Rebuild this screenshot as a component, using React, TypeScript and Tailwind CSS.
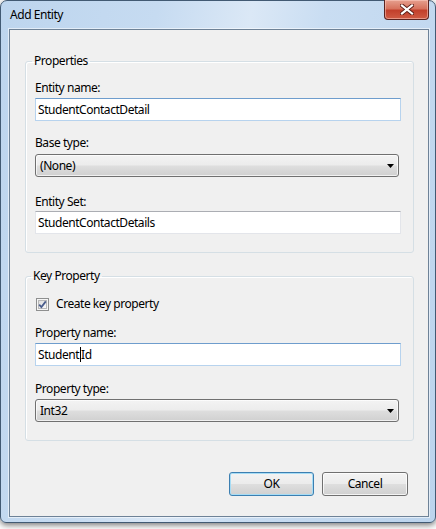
import React from "react";

const FONT = "font-['Segoe_UI','Noto_Sans',sans-serif] tracking-[-0.45px]";

function TextBox({ children, focused }: { children: React.ReactNode; focused?: boolean }) {
  return (
    <div
      className={
        "h-[23px] w-full flex items-center pl-[2px] bg-white border " +
        (focused
          ? "border-[#b7d3ee] border-t-[#6e9dcd]"
          : "border-[#e3e5ea] border-t-[#abadb3]")
      }
    >
      {children}
    </div>
  );
}

function Combo({ value }: { value: string }) {
  return (
    <div className="h-[23px] w-[calc(100%-2px)] flex items-center justify-between pl-[4px] pr-[4px] rounded-[3px] border border-[#707070] bg-[linear-gradient(to_bottom,#f3f3f3_0%,#ececec_48%,#dedede_52%,#d0d0d0_100%)] shadow-[inset_0_0_0_1px_rgba(255,255,255,0.7)]">
      <span>{value}</span>
      <svg width="7" height="4" viewBox="0 0 7 4">
        <polygon points="0,0 7,0 3.5,4" fill="#000" />
      </svg>
    </div>
  );
}

function Button({ children, isDefault, w }: { children: React.ReactNode; isDefault?: boolean; w: string }) {
  return (
    <div
      className={
        w +
        " h-[24px] flex items-center justify-center rounded-[3px] border bg-[linear-gradient(to_bottom,#f3f3f3_0%,#ececec_48%,#dedede_52%,#d0d0d0_100%)] " +
        (isDefault
          ? "border-[#3c7fb1] shadow-[inset_0_0_0_1px_#a6dcf5]"
          : "border-[#707070] shadow-[inset_0_0_0_1px_rgba(255,255,255,0.75)]")
      }
    >
      {children}
    </div>
  );
}

function Label({ children, mt }: { children: React.ReactNode; mt: string }) {
  return <div className={mt + " h-[16px] leading-[16px]"}>{children}</div>;
}

export default function App() {
  return (
    <div className={"w-[436px] h-[529px] bg-white text-[12px] text-black " + FONT}>
      <div className="w-[436px] h-[523px] rounded-t-[7px] rounded-b-[6px] border border-[#425a73] bg-[linear-gradient(100deg,#bdd5ee_0%,#c6dbf1_30%,#dbe8f6_48%,#c9ddf2_62%,#bcd4ed_100%)] shadow-[0_2px_6px_rgba(0,0,0,0.55)] flex flex-col">
        <div className="h-[28px] flex items-start justify-between pl-[9px] pr-[6px]">
          <span className="mt-[6px] leading-[16px]">Add Entity</span>
          <div className="-mt-px w-[45px] h-[20px] rounded-b-[4px] border border-[#5a2320] border-t-0 flex items-center justify-center bg-[linear-gradient(to_bottom,#e6a08f_0%,#d7735e_45%,#c2402c_55%,#cf5b44_100%)] shadow-[inset_0_0_0_1px_rgba(255,210,200,0.5)]">
            <svg width="14" height="11" viewBox="0 0 14 11">
              <path d="M2 1.5 L12 9.5 M12 1.5 L2 9.5" stroke="#5a1d16" strokeWidth="4" strokeLinecap="square" />
              <path d="M2 1.5 L12 9.5 M12 1.5 L2 9.5" stroke="#ffffff" strokeWidth="2.2" strokeLinecap="square" />
            </svg>
          </div>
        </div>
        <div className="mx-[8px] mr-[6px] h-[488px] border border-[#6e8297] bg-[#f0f0f0] flex flex-col shadow-[0_0_0_1px_rgba(255,255,255,0.55)]">
          <fieldset className="mx-[15px] mr-[14px] mt-[23px] border border-[#d5dfe5] rounded-[3px] pl-[9px] pr-[12px] pb-[18px] shadow-[inset_1px_1px_0_#ffffff]">
            <legend className="ml-[-3px] px-[2px] leading-[16px]">Properties</legend>
            <Label mt="mt-[11px]">Entity name:</Label>
            <div className="mt-[2px]">
              <TextBox focused>StudentContactDetail</TextBox>
            </div>
            <Label mt="mt-[14px]">Base type:</Label>
            <div className="mt-[3px]">
              <Combo value="(None)" />
            </div>
            <Label mt="mt-[17px]">Entity Set:</Label>
            <div className="mt-[1px]">
              <TextBox>StudentContactDetails</TextBox>
            </div>
          </fieldset>

          <fieldset className="mx-[15px] mr-[14px] mt-[15px] border border-[#d5dfe5] rounded-[3px] pl-[9px] pr-[12px] pb-[18px] shadow-[inset_1px_1px_0_#ffffff]">
            <legend className="ml-[-4px] px-[2px] leading-[16px]">Key Property</legend>
            <div className="mt-[12px] h-[16px] flex items-center gap-[7px] pl-[1px]">
              <svg width="13" height="13" viewBox="0 0 13 13">
                <defs>
                  <linearGradient id="cbg" x1="0" y1="0" x2="1" y2="1">
                    <stop offset="0" stopColor="#dcdcdc" />
                    <stop offset="1" stopColor="#fbfbfb" />
                  </linearGradient>
                </defs>
                <rect x="0.5" y="0.5" width="12" height="12" fill="#f6f6f6" stroke="#8e8f8f" />
                <rect x="2.5" y="2.5" width="8" height="8" fill="url(#cbg)" stroke="#b9b9b9" />
                <path d="M3.2 6.6 L5.4 9 L9.8 3.4" stroke="#4a5d8c" strokeWidth="1.8" fill="none" />
              </svg>
              <span className="leading-[16px]">Create key property</span>
            </div>
            <Label mt="mt-[13px]">Property name:</Label>
            <div className="mt-[2px]">
              <TextBox focused>
                <span>Student</span>
                <span className="inline-block w-px h-[15px] bg-black ml-px"></span>
                <span>Id</span>
              </TextBox>
            </div>
            <Label mt="mt-[15px]">Property type:</Label>
            <div className="mt-[2px]">
              <Combo value="Int32" />
            </div>
          </fieldset>

          <div className="mt-[31px] flex justify-end gap-[8px] pr-[20px]">
            <Button isDefault w="w-[85px]">OK</Button>
            <Button w="w-[86px]">Cancel</Button>
          </div>
        </div>
      </div>
    </div>
  );
}
